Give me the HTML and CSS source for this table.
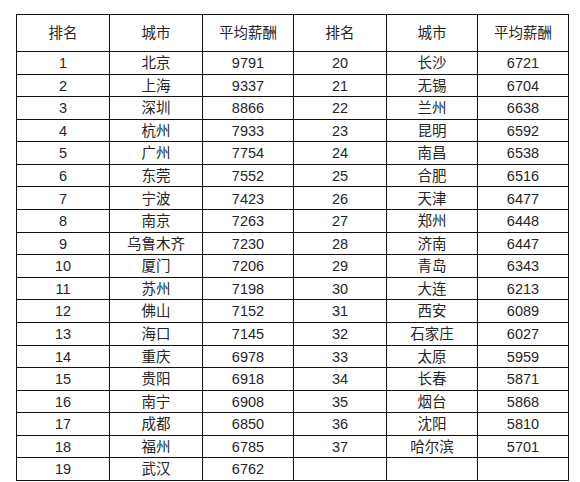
FILE: index.html
```html
<!DOCTYPE html>
<html lang="zh-CN">
<head>
<meta charset="utf-8">
<link rel="stylesheet" href="styles.css">
</head>
<body>
<div class="sheet">
  <div class="c h">排名</div><div class="c h">城市</div><div class="c h">平均薪酬</div>
  <div class="c h">排名</div><div class="c h">城市</div><div class="c h">平均薪酬</div>

  <div class="c">1</div><div class="c">北京</div><div class="c">9791</div><div class="c">20</div><div class="c">长沙</div><div class="c">6721</div>
  <div class="c">2</div><div class="c">上海</div><div class="c">9337</div><div class="c">21</div><div class="c">无锡</div><div class="c">6704</div>
  <div class="c">3</div><div class="c">深圳</div><div class="c">8866</div><div class="c">22</div><div class="c">兰州</div><div class="c">6638</div>
  <div class="c">4</div><div class="c">杭州</div><div class="c">7933</div><div class="c">23</div><div class="c">昆明</div><div class="c">6592</div>
  <div class="c">5</div><div class="c">广州</div><div class="c">7754</div><div class="c">24</div><div class="c">南昌</div><div class="c">6538</div>
  <div class="c">6</div><div class="c">东莞</div><div class="c">7552</div><div class="c">25</div><div class="c">合肥</div><div class="c">6516</div>
  <div class="c">7</div><div class="c">宁波</div><div class="c">7423</div><div class="c">26</div><div class="c">天津</div><div class="c">6477</div>
  <div class="c">8</div><div class="c">南京</div><div class="c">7263</div><div class="c">27</div><div class="c">郑州</div><div class="c">6448</div>
  <div class="c">9</div><div class="c">乌鲁木齐</div><div class="c">7230</div><div class="c">28</div><div class="c">济南</div><div class="c">6447</div>
  <div class="c">10</div><div class="c">厦门</div><div class="c">7206</div><div class="c">29</div><div class="c">青岛</div><div class="c">6343</div>
  <div class="c">11</div><div class="c">苏州</div><div class="c">7198</div><div class="c">30</div><div class="c">大连</div><div class="c">6213</div>
  <div class="c">12</div><div class="c">佛山</div><div class="c">7152</div><div class="c">31</div><div class="c">西安</div><div class="c">6089</div>
  <div class="c">13</div><div class="c">海口</div><div class="c">7145</div><div class="c">32</div><div class="c">石家庄</div><div class="c">6027</div>
  <div class="c">14</div><div class="c">重庆</div><div class="c">6978</div><div class="c">33</div><div class="c">太原</div><div class="c">5959</div>
  <div class="c">15</div><div class="c">贵阳</div><div class="c">6918</div><div class="c">34</div><div class="c">长春</div><div class="c">5871</div>
  <div class="c">16</div><div class="c">南宁</div><div class="c">6908</div><div class="c">35</div><div class="c">烟台</div><div class="c">5868</div>
  <div class="c">17</div><div class="c">成都</div><div class="c">6850</div><div class="c">36</div><div class="c">沈阳</div><div class="c">5810</div>
  <div class="c">18</div><div class="c">福州</div><div class="c">6785</div><div class="c">37</div><div class="c">哈尔滨</div><div class="c">5701</div>
  <div class="c">19</div><div class="c">武汉</div><div class="c">6762</div><div class="c"></div><div class="c"></div><div class="c"></div>
</div>
</body>
</html>
```

FILE: styles.css
```css
html, body {
  margin: 0;
  padding: 0;
  background: #ffffff;
}

body {
  padding: 14px 0 0 16px;
  font-family: "Liberation Sans", Arial, "Noto Sans CJK SC", sans-serif;
  color: #262626;
}

.sheet {
  display: grid;
  grid-template-columns: 93px 93px 91px 93px 91px 91px;
  grid-template-rows: 37px repeat(19, 22.58px);
  width: max-content;
  border-top: 1px solid #111111;
  border-left: 1px solid #111111;
}

.c {
  box-sizing: border-box;
  border-right: 1px solid #111111;
  border-bottom: 1px solid #111111;
  display: flex;
  align-items: center;
  justify-content: center;
  font-size: 14.5px;
  line-height: 1;
  padding-top: 1px;
}

.h {
  font-size: 14.5px;
}
```
